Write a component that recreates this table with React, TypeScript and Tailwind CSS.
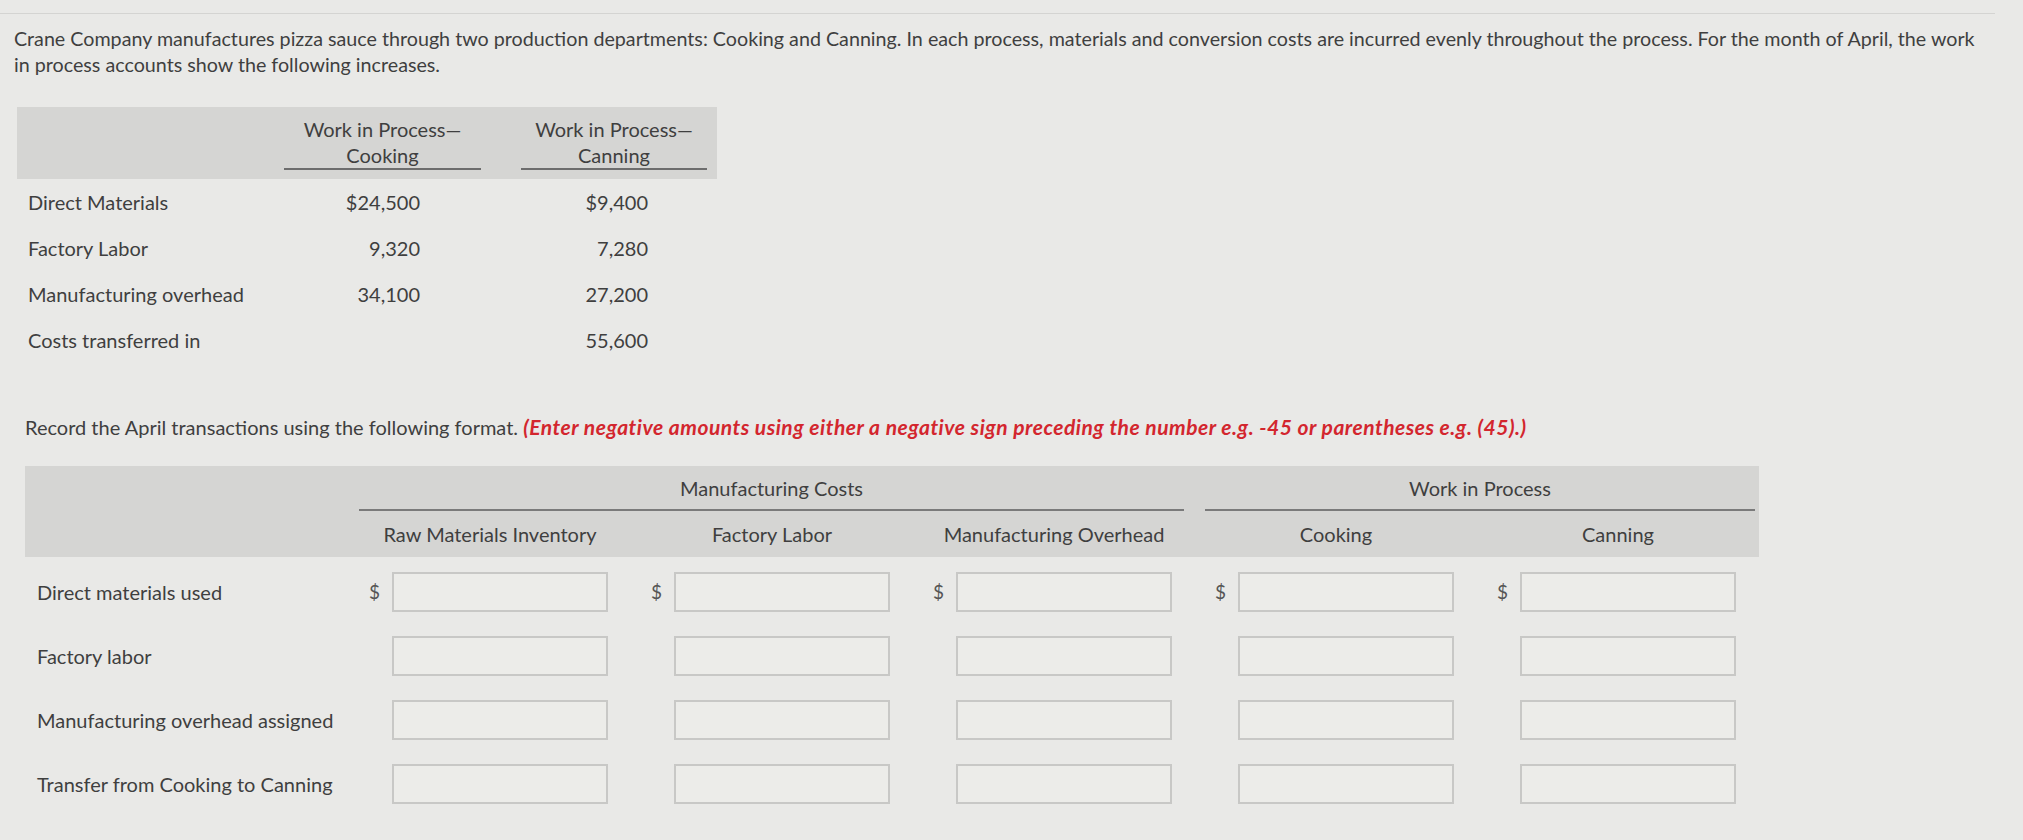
import React from "react";

const wipRows = [
  { label: "Direct Materials", cooking: "$24,500", canning: "$9,400" },
  { label: "Factory Labor", cooking: "9,320", canning: "7,280" },
  { label: "Manufacturing overhead", cooking: "34,100", canning: "27,200" },
  { label: "Costs transferred in", cooking: "", canning: "55,600" },
];

const entryRows = [
  "Direct materials used",
  "Factory labor",
  "Manufacturing overhead assigned",
  "Transfer from Cooking to Canning",
];

const subHeads = [
  "Raw Materials Inventory",
  "Factory Labor",
  "Manufacturing Overhead",
  "Cooking",
  "Canning",
];

function AmountCell({ showDollar }: { showDollar: boolean }) {
  return (
    <div className="flex items-center">
      <span className="w-[43px] pl-[20px] text-[19px] text-[#555]">{showDollar ? "$" : ""}</span>
      <div className="h-[40px] w-[216px] border-2 border-[#c8c8c6] bg-[#ecece9]" />
    </div>
  );
}

export default function App() {
  return (
    <div className="min-h-[840px] w-[2023px] overflow-hidden bg-[#e9e9e7] font-['Lato',sans-serif] text-[20px] text-[#3f3f3f]">
      <div className="pt-[13px]">
        <div className="w-[1995px] border-t border-[#d4d4d2]" />
      </div>

      {/* Intro */}
      <p className="ml-[14px] mt-[12px] w-[1977px] text-[19.7px] leading-[26px]">
        Crane Company manufactures pizza sauce through two production departments: Cooking and Canning. In each process,
        materials and conversion costs are incurred evenly throughout the process. For the month of April, the work in
        process accounts show the following increases.
      </p>

      {/* Work in process increases */}
      <div className="ml-[17px] mt-[29px] w-[700px]">
        <div className="flex h-[72px] bg-[#d5d5d3] pt-[9px]">
          <div className="w-[267px]" />
          <div className="w-[197px] self-start border-b-2 border-[#6d6d6d] text-center leading-[26px]">
            Work in Process—<br />Cooking
          </div>
          <div className="w-[40px]" />
          <div className="w-[186px] self-start border-b-2 border-[#6d6d6d] text-center leading-[26px]">
            Work in Process—<br />Canning
          </div>
        </div>
        {wipRows.map((r) => (
          <div key={r.label} className="flex h-[46px] items-center">
            <div className="w-[267px] pl-[11px]">{r.label}</div>
            <div className="w-[197px] pr-[61px] text-right">{r.cooking}</div>
            <div className="w-[40px]" />
            <div className="w-[186px] pr-[59px] text-right">{r.canning}</div>
          </div>
        ))}
      </div>

      {/* Instructions */}
      <p className="ml-[25px] mt-[51px] leading-[26px]">
        Record the April transactions using the following format.{" "}
        <span className="text-[21px] font-bold italic tracking-[0.5px] text-[#d3262e]">
          (Enter negative amounts using either a negative sign preceding the number e.g. -45 or parentheses e.g. (45).)
        </span>
      </p>

      {/* Journal grid */}
      <div className="ml-[25px] mt-[26px] w-[1734px]">
        <div className="grid grid-cols-[324px_repeat(5,282px)] bg-[#d5d5d3]">
          <div className="h-[45px]" />
          <div className="col-span-3 pl-[10px] pr-[11px]">
            <div className="flex h-[45px] items-center justify-center border-b-2 border-[#7a7a7a]">Manufacturing Costs</div>
          </div>
          <div className="col-span-2 pl-[10px] pr-[4px]">
            <div className="flex h-[45px] items-center justify-center border-b-2 border-[#7a7a7a]">Work in Process</div>
          </div>
          <div className="h-[46px]" />
          {subHeads.map((h) => (
            <div key={h} className="flex h-[46px] items-center justify-center">
              {h}
            </div>
          ))}
        </div>
        <div className="pt-[3px]">
          {entryRows.map((label, i) => (
            <div key={label} className="grid h-[64px] grid-cols-[324px_repeat(5,282px)] items-center">
              <div className="pl-[12px]">{label}</div>
              {subHeads.map((h) => (
                <AmountCell key={h} showDollar={i === 0} />
              ))}
            </div>
          ))}
        </div>
      </div>
    </div>
  );
}
